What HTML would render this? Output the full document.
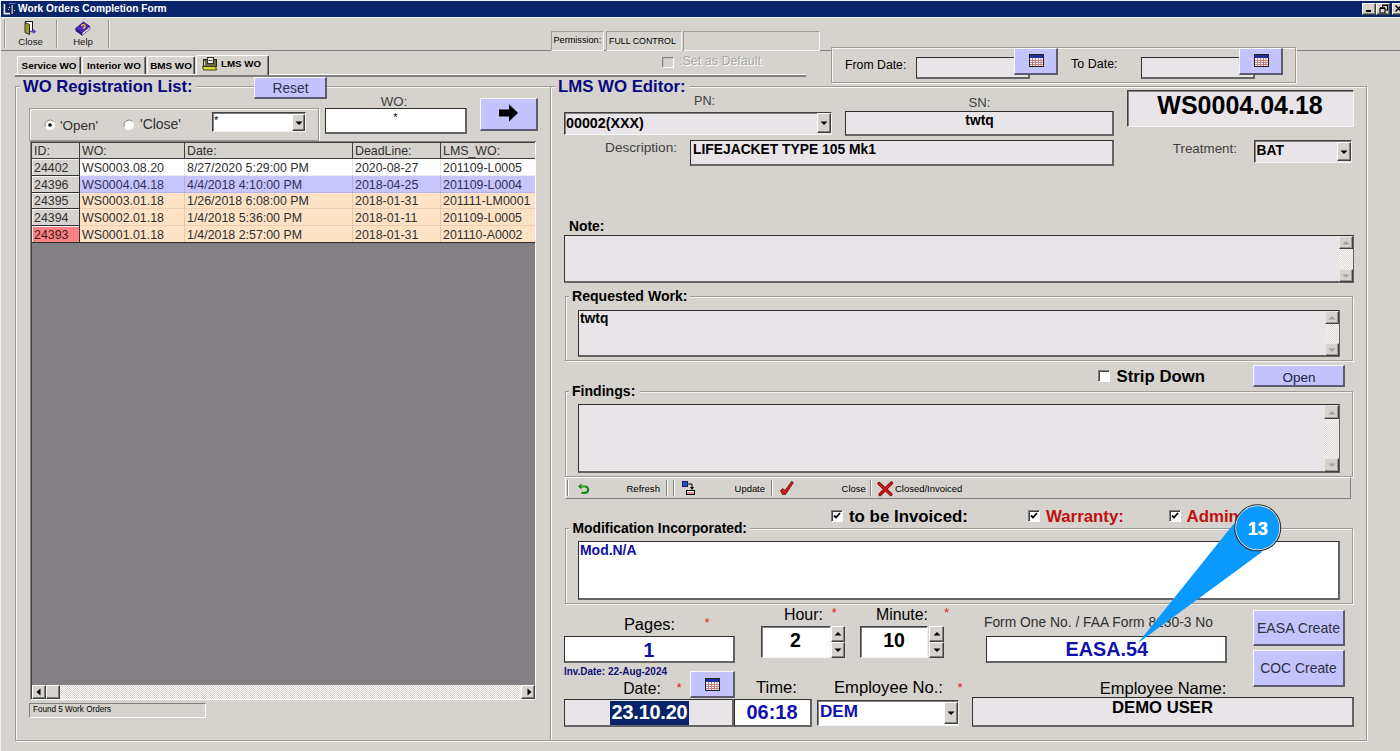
<!DOCTYPE html><html><head><meta charset="utf-8"><style>
html,body{margin:0;padding:0;width:1400px;height:751px;overflow:hidden;background:#d6d3ce}
body{position:relative;font-family:"Liberation Sans",sans-serif}
div{position:absolute}
.t{position:absolute;white-space:nowrap;line-height:1}
svg{position:absolute}
</style></head><body>
<div style="left:0px;top:0px;width:1400px;height:751px;background:#d6d3ce"></div>
<div style="left:0px;top:0px;width:1400px;height:1px;background:#eef0f8"></div>
<div style="left:0px;top:0px;width:1px;height:751px;background:#eef2fc"></div>
<div style="left:1px;top:1px;width:1399px;height:16px;background:#0a246a"></div>
<svg style="position:absolute;left:0;top:0" width="18" height="17"><path d="M4.4 4v9.6h5.6" stroke="#e8e8e0" stroke-width="1.6" fill="none"/><path d="M12.2 5v9" stroke="#b0a878" stroke-width="1.6"/><path d="M9 3.5h6.5" stroke="#6070a8" stroke-width="1"/><circle cx="9.5" cy="7.5" r="0.6" fill="#fff"/><circle cx="8.5" cy="9.5" r="0.6" fill="#fff"/><circle cx="14.5" cy="10.5" r="0.6" fill="#fff"/></svg>
<span class="t" style="left:18px;top:3.87px;font-size:10.2px;font-weight:bold;color:#fff;">Work Orders Completion Form</span>
<div style="left:1362px;top:3px;width:14px;height:12px;background:#d6d3ce;border-style:solid;border-width:1px;border-color:#fff #404040 #404040 #fff;box-shadow:inset -1px -1px #808080;box-sizing:border-box;"></div>
<div style="left:1376px;top:3px;width:14px;height:12px;background:#d6d3ce;border-style:solid;border-width:1px;border-color:#fff #404040 #404040 #fff;box-shadow:inset -1px -1px #808080;box-sizing:border-box;"></div>
<div style="left:1392px;top:3px;width:14px;height:12px;background:#d6d3ce;border-style:solid;border-width:1px;border-color:#fff #404040 #404040 #fff;box-shadow:inset -1px -1px #808080;box-sizing:border-box;"></div>
<div style="position:absolute;left:1366px;top:10px;width:5px;height:2px;background:#000"></div>
<svg style="position:absolute;left:1379px;top:4px" width="10" height="10"><path d="M3.5 3V1h5v5H6.5M3.5 1.5h5" stroke="#000" stroke-width="1.1" fill="none"/><path d="M1 4.5h5v4.5H1z" stroke="#000" stroke-width="1.1" fill="none"/><path d="M1 4h5" stroke="#000" stroke-width="1.6"/></svg>
<svg style="position:absolute;left:1395px;top:5px" width="8" height="8"><path d="M0.5 0.5l6 6M6.5 0.5l-6 6" stroke="#000" stroke-width="1.5"/></svg>
<div style="left:1px;top:17px;width:1399px;height:1px;background:#eef0f6"></div>
<div style="left:1px;top:50px;width:1399px;height:1px;background:#808080"></div>
<div style="left:4px;top:20px;width:1px;height:28px;background:#9a9892"></div>
<div style="left:5px;top:20px;width:1px;height:28px;background:#ecebe6"></div>
<div style="left:56px;top:20px;width:1px;height:28px;background:#9a9892"></div>
<div style="left:57px;top:20px;width:1px;height:28px;background:#ecebe6"></div>
<div style="left:108px;top:20px;width:1px;height:28px;background:#9a9892"></div>
<div style="left:109px;top:20px;width:1px;height:28px;background:#ecebe6"></div>
<svg style="position:absolute;left:15px;top:17px" width="30" height="22" viewBox="15 17 30 22">
<rect x="25.5" y="21.5" width="7" height="10" fill="#fff" stroke="#181818" stroke-width="1"/>
<path d="M25 22.5L29.5 24.5V34.5L25 32.5Z" fill="#a0a028" stroke="#202010" stroke-width="0.9"/>
<path d="M30 31.5h4.5M33 29.8l2.2 1.7-2.2 1.7" stroke="#5050c8" stroke-width="1.6" fill="none"/>
</svg>
<span class="t" style="left:-269.5px;width:600px;text-align:center;top:37.47px;font-size:9.6px;font-weight:normal;color:#202020;">Close</span>
<svg style="position:absolute;left:70px;top:17px" width="25" height="22" viewBox="70 17 25 22">
<path d="M75.5 28.5L83.5 22L90 26.5L82 33Z" fill="#5028c0" stroke="#201060" stroke-width="0.8"/>
<path d="M82 33L90 26.5V29L82 35.5Z" fill="#f0f0f0" stroke="#201060" stroke-width="0.6"/>
<path d="M75.5 28.5L82 33V35.5L75.5 31Z" fill="#281080"/>
<path d="M81.5 26.3a1.8 1.6 0 1 1 2 1.6v1.2" stroke="#f0d040" stroke-width="1.3" fill="none"/>
</svg>
<span class="t" style="left:-217px;width:600px;text-align:center;top:37.47px;font-size:9.6px;font-weight:normal;color:#202020;">Help</span>
<div style="left:17px;top:56px;width:64px;height:18px;background:#d6d3ce;border-left:1px solid #fff;border-top:1px solid #fff;border-right:1px solid #404040;box-shadow:inset -1px 0 #808080;box-sizing:border-box;border-radius:2px 2px 0 0"></div>
<span class="t" style="left:-251.0px;width:600px;text-align:center;top:60.62px;font-size:9.9px;font-weight:bold;color:#000;">Service WO</span>
<div style="left:82px;top:56px;width:64px;height:18px;background:#d6d3ce;border-left:1px solid #fff;border-top:1px solid #fff;border-right:1px solid #404040;box-shadow:inset -1px 0 #808080;box-sizing:border-box;border-radius:2px 2px 0 0"></div>
<span class="t" style="left:-186.0px;width:600px;text-align:center;top:60.62px;font-size:9.9px;font-weight:bold;color:#000;">Interior WO</span>
<div style="left:147px;top:56px;width:48px;height:18px;background:#d6d3ce;border-left:1px solid #fff;border-top:1px solid #fff;border-right:1px solid #404040;box-shadow:inset -1px 0 #808080;box-sizing:border-box;border-radius:2px 2px 0 0"></div>
<span class="t" style="left:-129.0px;width:600px;text-align:center;top:60.62px;font-size:9.9px;font-weight:bold;color:#000;">BMS WO</span>
<div style="left:15px;top:74px;width:791px;height:1px;background:#fff"></div>
<div style="left:15px;top:75px;width:791px;height:2px;background:#808080"></div>
<div style="left:196px;top:55px;width:73px;height:20px;background:#d6d3ce;border-left:1px solid #fff;border-top:1px solid #fff;border-right:1px solid #404040;box-shadow:inset -1px 0 #808080;box-sizing:border-box;border-radius:2px 2px 0 0"></div>
<svg style="position:absolute;left:200px;top:55px" width="20" height="18" viewBox="200 55 20 18">
<rect x="203.5" y="59.5" width="13" height="7" fill="#6a6a48" stroke="#282818"/>
<rect x="207.5" y="57.5" width="6" height="6" fill="#ececec" stroke="#303030"/>
<path d="M208.5 60.5h4" stroke="#505050"/>
<path d="M204.5 61.5v4" stroke="#e0e0c0"/>
<path d="M202.5 66.5h13l1 3.5h-13z" fill="#d8e028" stroke="#303010" stroke-width="0.9"/>
</svg>
<span class="t" style="left:221px;top:58.76px;font-size:9.73px;font-weight:bold;color:#000;">LMS WO</span>
<div style="left:15px;top:86px;width:536px;height:655px;border:1px solid #a09c94;box-sizing:border-box;box-shadow:inset 1px 1px #f6f6f4, 1px 1px #f6f6f4;"></div>
<div style="left:20px;top:78px;width:177px;height:18px;background:#d6d3ce"></div>
<span class="t" style="left:23px;top:78.75px;font-size:16.6px;font-weight:bold;color:#08087e;">WO Registration List:</span>
<div style="left:254px;top:77px;width:73px;height:22px;background:#c5c3fd;border-style:solid;border-width:1px 2px 2px 1px;border-color:#f8f8ff #5c5c6c #5c5c6c #f8f8ff;box-sizing:border-box;"></div>
<span class="t" style="left:-9.5px;width:600px;text-align:center;top:82.32px;font-size:13.8px;font-weight:normal;color:#303050;">Reset</span>
<div style="left:29px;top:108px;width:290px;height:33px;border:1px solid #a09c94;box-sizing:border-box;box-shadow:inset 1px 1px #f6f6f4, 1px 1px #f6f6f4;"></div>
<svg style="position:absolute;left:44px;top:118.5px" width="12" height="12"><circle cx="6" cy="6" r="5" fill="#fff"/><path d="M1.2 7.5A5 5 0 0 1 9.5 2.5" stroke="#808080" fill="none"/><path d="M2.5 9.5A5 5 0 0 0 10.8 4.5" stroke="#f4f4f4" fill="none"/><circle cx="6" cy="6" r="1.8" fill="#000"/></svg>
<span class="t" style="left:60px;top:118.62px;font-size:13.44px;font-weight:normal;color:#303030;">'Open'</span>
<svg style="position:absolute;left:123px;top:118.5px" width="12" height="12"><circle cx="6" cy="6" r="5" fill="#fff"/><path d="M1.2 7.5A5 5 0 0 1 9.5 2.5" stroke="#808080" fill="none"/><path d="M2.5 9.5A5 5 0 0 0 10.8 4.5" stroke="#f4f4f4" fill="none"/></svg>
<span class="t" style="left:140px;top:118.19px;font-size:13.95px;font-weight:normal;color:#303030;">'Close'</span>
<div style="left:212px;top:112px;width:94px;height:20px;background:#fff;border-style:solid;border-width:1px;border-color:#404040 #f4f4f4 #f4f4f4 #404040;box-shadow:inset 1px 1px #808080;box-sizing:border-box;"></div>
<span class="t" style="left:214px;top:114.69px;font-size:11px;font-weight:normal;color:#000;">*</span>
<div style="left:292px;top:114px;width:13px;height:17px;background:#d6d3ce;border-style:solid;border-width:1px;border-color:#fff #404040 #404040 #fff;box-shadow:inset -1px -1px #808080;box-sizing:border-box;"></div>
<svg style="position:absolute;left:294.5px;top:120.5px" width="8" height="5"><path d="M0.5 0.5h7l-3.5 3.5z" fill="#000"/></svg>
<span class="t" style="left:94px;width:600px;text-align:center;top:94.78px;font-size:13.25px;font-weight:normal;color:#404040;">WO:</span>
<div style="left:325px;top:108px;width:142px;height:26px;background:#fff;border-style:solid;border-width:1px 2px 2px 1px;border-color:#303030 #646464 #646464 #303030;box-sizing:border-box;"></div>
<span class="t" style="left:95.5px;width:600px;text-align:center;top:111.69px;font-size:11px;font-weight:normal;color:#000;">*</span>
<div style="left:480px;top:98px;width:58px;height:33px;background:#c5c3fd;border-style:solid;border-width:1px 2px 2px 1px;border-color:#f8f8ff #5c5c6c #5c5c6c #f8f8ff;box-sizing:border-box;"></div>
<svg style="position:absolute;left:498px;top:103px" width="22" height="20" viewBox="0 0 22 20">
<path d="M1 6.5h10V1.5l9 8.5-9 8.5v-5H1z" fill="#000"/>
<path d="M11 1.5l9 8.5" stroke="#555" stroke-width="1"/>
</svg>
<div style="left:30px;top:141px;width:506px;height:559px;background:#828083;border-left:1px solid #808080;border-top:1px solid #808080;box-shadow:inset 1px 1px #404040;box-sizing:border-box"></div>
<div style="left:32px;top:143px;width:503px;height:16px;background:#d6d3ce;border-bottom:1px solid #404040;box-sizing:border-box"></div>
<span class="t" style="left:34px;top:144.50px;font-size:12.4px;font-weight:normal;color:#303030;">ID:</span>
<div style="left:79px;top:143px;width:1px;height:16px;background:#404040"></div>
<span class="t" style="left:82px;top:144.50px;font-size:12.4px;font-weight:normal;color:#303030;">WO:</span>
<div style="left:184px;top:143px;width:1px;height:16px;background:#404040"></div>
<span class="t" style="left:187px;top:144.50px;font-size:12.4px;font-weight:normal;color:#303030;">Date:</span>
<div style="left:352px;top:143px;width:1px;height:16px;background:#404040"></div>
<span class="t" style="left:355px;top:144.50px;font-size:12.4px;font-weight:normal;color:#303030;">DeadLine:</span>
<div style="left:440px;top:143px;width:1px;height:16px;background:#404040"></div>
<span class="t" style="left:443px;top:144.50px;font-size:12.4px;font-weight:normal;color:#303030;">LMS_WO:</span>
<div style="left:32px;top:159px;width:48px;height:17px;background:#d6d3ce;border-bottom:1px solid #303030;border-right:1px solid #303030;box-shadow:inset 1px 1px #f4f4f4;box-sizing:border-box"></div>
<div style="left:80px;top:159px;width:455px;height:17px;background:#ffffff;border-bottom:1px solid rgba(0,0,0,0.08);box-sizing:border-box"></div>
<div style="left:184px;top:159px;width:1px;height:17px;background:rgba(0,0,0,0.1)"></div>
<div style="left:352px;top:159px;width:1px;height:17px;background:rgba(0,0,0,0.1)"></div>
<div style="left:440px;top:159px;width:1px;height:17px;background:rgba(0,0,0,0.1)"></div>
<span class="t" style="left:34px;top:161.50px;font-size:12.4px;font-weight:normal;color:#303030;">24402</span>
<span class="t" style="left:82px;top:161.50px;font-size:12.4px;font-weight:normal;color:#303030;">WS0003.08.20</span>
<span class="t" style="left:187px;top:161.50px;font-size:12.4px;font-weight:normal;color:#303030;">8/27/2020 5:29:00 PM</span>
<span class="t" style="left:355px;top:161.50px;font-size:12.4px;font-weight:normal;color:#303030;">2020-08-27</span>
<span class="t" style="left:443px;top:161.50px;font-size:12.4px;font-weight:normal;color:#303030;">201109-L0005</span>
<div style="left:32px;top:176px;width:48px;height:17px;background:#d6d3ce;border-bottom:1px solid #303030;border-right:1px solid #303030;box-shadow:inset 1px 1px #f4f4f4;box-sizing:border-box"></div>
<div style="left:80px;top:176px;width:455px;height:17px;background:#c8c4fc;border-bottom:1px solid rgba(0,0,0,0.08);box-sizing:border-box"></div>
<div style="left:184px;top:176px;width:1px;height:17px;background:rgba(0,0,0,0.1)"></div>
<div style="left:352px;top:176px;width:1px;height:17px;background:rgba(0,0,0,0.1)"></div>
<div style="left:440px;top:176px;width:1px;height:17px;background:rgba(0,0,0,0.1)"></div>
<span class="t" style="left:34px;top:178.50px;font-size:12.4px;font-weight:normal;color:#303030;">24396</span>
<span class="t" style="left:82px;top:178.50px;font-size:12.4px;font-weight:normal;color:#303060;">WS0004.04.18</span>
<span class="t" style="left:187px;top:178.50px;font-size:12.4px;font-weight:normal;color:#303060;">4/4/2018 4:10:00 PM</span>
<span class="t" style="left:355px;top:178.50px;font-size:12.4px;font-weight:normal;color:#303060;">2018-04-25</span>
<span class="t" style="left:443px;top:178.50px;font-size:12.4px;font-weight:normal;color:#303060;">201109-L0004</span>
<div style="left:32px;top:193px;width:48px;height:16px;background:#d6d3ce;border-bottom:1px solid #303030;border-right:1px solid #303030;box-shadow:inset 1px 1px #f4f4f4;box-sizing:border-box"></div>
<div style="left:80px;top:193px;width:455px;height:16px;background:#fde2c6;border-bottom:1px solid rgba(0,0,0,0.08);box-sizing:border-box"></div>
<div style="left:184px;top:193px;width:1px;height:16px;background:rgba(0,0,0,0.1)"></div>
<div style="left:352px;top:193px;width:1px;height:16px;background:rgba(0,0,0,0.1)"></div>
<div style="left:440px;top:193px;width:1px;height:16px;background:rgba(0,0,0,0.1)"></div>
<span class="t" style="left:34px;top:194.50px;font-size:12.4px;font-weight:normal;color:#303030;">24395</span>
<span class="t" style="left:82px;top:194.50px;font-size:12.4px;font-weight:normal;color:#303030;">WS0003.01.18</span>
<span class="t" style="left:187px;top:194.50px;font-size:12.4px;font-weight:normal;color:#303030;">1/26/2018 6:08:00 PM</span>
<span class="t" style="left:355px;top:194.50px;font-size:12.4px;font-weight:normal;color:#303030;">2018-01-31</span>
<span class="t" style="left:443px;top:194.50px;font-size:12.4px;font-weight:normal;color:#303030;">201111-LM0001</span>
<div style="left:32px;top:209px;width:48px;height:17px;background:#d6d3ce;border-bottom:1px solid #303030;border-right:1px solid #303030;box-shadow:inset 1px 1px #f4f4f4;box-sizing:border-box"></div>
<div style="left:80px;top:209px;width:455px;height:17px;background:#fde2c6;border-bottom:1px solid rgba(0,0,0,0.08);box-sizing:border-box"></div>
<div style="left:184px;top:209px;width:1px;height:17px;background:rgba(0,0,0,0.1)"></div>
<div style="left:352px;top:209px;width:1px;height:17px;background:rgba(0,0,0,0.1)"></div>
<div style="left:440px;top:209px;width:1px;height:17px;background:rgba(0,0,0,0.1)"></div>
<span class="t" style="left:34px;top:211.50px;font-size:12.4px;font-weight:normal;color:#303030;">24394</span>
<span class="t" style="left:82px;top:211.50px;font-size:12.4px;font-weight:normal;color:#303030;">WS0002.01.18</span>
<span class="t" style="left:187px;top:211.50px;font-size:12.4px;font-weight:normal;color:#303030;">1/4/2018 5:36:00 PM</span>
<span class="t" style="left:355px;top:211.50px;font-size:12.4px;font-weight:normal;color:#303030;">2018-01-11</span>
<span class="t" style="left:443px;top:211.50px;font-size:12.4px;font-weight:normal;color:#303030;">201109-L0005</span>
<div style="left:32px;top:226px;width:48px;height:17px;background:#fa8284;border-bottom:1px solid #303030;border-right:1px solid #303030;box-shadow:inset 1px 1px #f4f4f4;box-sizing:border-box"></div>
<div style="left:80px;top:226px;width:455px;height:17px;background:#fde2c6;border-bottom:1px solid rgba(0,0,0,0.08);box-sizing:border-box"></div>
<div style="left:184px;top:226px;width:1px;height:17px;background:rgba(0,0,0,0.1)"></div>
<div style="left:352px;top:226px;width:1px;height:17px;background:rgba(0,0,0,0.1)"></div>
<div style="left:440px;top:226px;width:1px;height:17px;background:rgba(0,0,0,0.1)"></div>
<span class="t" style="left:34px;top:228.50px;font-size:12.4px;font-weight:normal;color:#401818;">24393</span>
<span class="t" style="left:82px;top:228.50px;font-size:12.4px;font-weight:normal;color:#303030;">WS0001.01.18</span>
<span class="t" style="left:187px;top:228.50px;font-size:12.4px;font-weight:normal;color:#303030;">1/4/2018 2:57:00 PM</span>
<span class="t" style="left:355px;top:228.50px;font-size:12.4px;font-weight:normal;color:#303030;">2018-01-31</span>
<span class="t" style="left:443px;top:228.50px;font-size:12.4px;font-weight:normal;color:#303030;">201110-A0002</span>
<div style="left:32px;top:242px;width:503px;height:1px;background:#2a2a2a"></div>
<div style="left:32px;top:685px;width:503px;height:14px;background:repeating-conic-gradient(#fff 0 25%, #d6d3ce 0 50%) 0 0/2px 2px;"></div>
<div style="left:32px;top:685px;width:14px;height:14px;background:#d6d3ce;border-style:solid;border-width:1px;border-color:#fff #404040 #404040 #fff;box-shadow:inset -1px -1px #808080;box-sizing:border-box;"></div>
<div style="left:46px;top:685px;width:14px;height:14px;background:#d6d3ce;border-style:solid;border-width:1px;border-color:#fff #404040 #404040 #fff;box-shadow:inset -1px -1px #808080;box-sizing:border-box;"></div>
<div style="left:521px;top:685px;width:14px;height:14px;background:#d6d3ce;border-style:solid;border-width:1px;border-color:#fff #404040 #404040 #fff;box-shadow:inset -1px -1px #808080;box-sizing:border-box;"></div>
<svg style="position:absolute;left:35px;top:688px" width="8" height="8"><path d="M5.5 0.5v7l-4-3.5z" fill="#000"/></svg>
<svg style="position:absolute;left:525px;top:688px" width="8" height="8"><path d="M2.5 0.5v7l4-3.5z" fill="#000"/></svg>
<div style="left:535px;top:142px;width:1px;height:558px;background:#fff"></div>
<div style="left:31px;top:699px;width:505px;height:1px;background:#fff"></div>
<div style="left:29px;top:703px;width:177px;height:15px;border-style:solid;border-width:1px;border-color:#808080 #fff #fff #808080;box-sizing:border-box"></div>
<span class="t" style="left:33px;top:705.62px;font-size:8.13px;font-weight:normal;color:#000;">Found 5 Work Orders</span>
<div style="left:551px;top:31px;width:53px;height:20px;border-style:solid;border-width:1px;border-color:#a09c96 #f4f4f4 #f4f4f4 #a09c96;box-sizing:border-box"></div>
<span class="t" style="left:553.5px;top:36.25px;font-size:9.15px;font-weight:normal;color:#000;">Permission:</span>
<div style="left:606px;top:31px;width:76px;height:20px;border-style:solid;border-width:1px;border-color:#a09c96 #f4f4f4 #f4f4f4 #a09c96;box-sizing:border-box"></div>
<span class="t" style="left:609px;top:36.52px;font-size:8.84px;font-weight:normal;color:#000;">FULL CONTROL</span>
<div style="left:683px;top:31px;width:137px;height:20px;border-style:solid;border-width:1px;border-color:#a09c96 #f4f4f4 #f4f4f4 #a09c96;box-sizing:border-box"></div>
<div style="left:662px;top:57px;width:12px;height:11px;border-style:solid;border-width:1px;border-color:#808080 #fff #fff #808080;box-shadow:inset 1px 1px #c0c0c0;box-sizing:border-box"></div>
<span class="t" style="left:679px;top:55.42px;font-size:12.5px;font-weight:normal;color:#a8a8a8;text-shadow:1px 1px #fff">:Set as Default</span>
<div style="left:831px;top:47px;width:466px;height:37px;background:#d6d3ce"></div>
<div style="left:831px;top:47px;width:465px;height:36px;border:1px solid #a09c94;box-sizing:border-box;box-shadow:inset 1px 1px #f6f6f4, 1px 1px #f6f6f4;"></div>
<span class="t" style="left:845px;top:58.60px;font-size:12.28px;font-weight:normal;color:#000;">From Date:</span>
<div style="left:916px;top:57px;width:114px;height:22px;background:#e8e4e8;border-style:solid;border-width:1px 2px 2px 1px;border-color:#303030 #646464 #646464 #303030;box-sizing:border-box;"></div>
<div style="left:1014px;top:48px;width:44px;height:27px;background:#c5c3fd;border-style:solid;border-width:1px 2px 2px 1px;border-color:#f8f8ff #5c5c6c #5c5c6c #f8f8ff;box-sizing:border-box;"></div>
<svg style="position:absolute;left:1029px;top:54px" width="15" height="13" viewBox="0 0 15 13">
<rect x="0.5" y="0.5" width="14" height="12" fill="#fff" stroke="#202020"/>
<rect x="1" y="1" width="13" height="3" fill="#2030a0"/>
<path d="M1 6.5h13M1 8.5h13M1 10.5h13M3.5 4v8M6.5 4v8M9.5 4v8M12 4v8" stroke="#c08080" stroke-width="1"/>
</svg>
<span class="t" style="left:1071px;top:58.41px;font-size:12.51px;font-weight:normal;color:#000;">To Date:</span>
<div style="left:1141px;top:57px;width:114px;height:22px;background:#e8e4e8;border-style:solid;border-width:1px 2px 2px 1px;border-color:#303030 #646464 #646464 #303030;box-sizing:border-box;"></div>
<div style="left:1239px;top:48px;width:44px;height:27px;background:#c5c3fd;border-style:solid;border-width:1px 2px 2px 1px;border-color:#f8f8ff #5c5c6c #5c5c6c #f8f8ff;box-sizing:border-box;"></div>
<svg style="position:absolute;left:1254px;top:54px" width="15" height="13" viewBox="0 0 15 13">
<rect x="0.5" y="0.5" width="14" height="12" fill="#fff" stroke="#202020"/>
<rect x="1" y="1" width="13" height="3" fill="#2030a0"/>
<path d="M1 6.5h13M1 8.5h13M1 10.5h13M3.5 4v8M6.5 4v8M9.5 4v8M12 4v8" stroke="#c08080" stroke-width="1"/>
</svg>
<div style="left:550px;top:86px;width:817px;height:655px;border:1px solid #a09c94;box-sizing:border-box;box-shadow:inset 1px 1px #f6f6f4, 1px 1px #f6f6f4;"></div>
<div style="left:555px;top:78px;width:135px;height:18px;background:#d6d3ce"></div>
<span class="t" style="left:558px;top:78.58px;font-size:16.8px;font-weight:bold;color:#08087e;">LMS WO Editor:</span>
<span class="t" style="left:404.5px;width:600px;text-align:center;top:95.33px;font-size:12.6px;font-weight:normal;color:#404040;">PN:</span>
<div style="left:564px;top:112px;width:268px;height:23px;background:#e8e4e8;border-style:solid;border-width:1px;border-color:#404040 #f4f4f4 #f4f4f4 #404040;box-shadow:inset 1px 1px #808080;box-sizing:border-box;"></div>
<span class="t" style="left:566px;top:115.90px;font-size:14.3px;font-weight:bold;color:#000;">00002(XXX)</span>
<div style="left:817px;top:113px;width:14px;height:20px;background:#d6d3ce;border-style:solid;border-width:1px;border-color:#fff #404040 #404040 #fff;box-shadow:inset -1px -1px #808080;box-sizing:border-box;"></div>
<svg style="position:absolute;left:820.0px;top:121.0px" width="8" height="5"><path d="M0.5 0.5h7l-3.5 3.5z" fill="#000"/></svg>
<span class="t" style="left:679.5px;width:600px;text-align:center;top:95.88px;font-size:13.14px;font-weight:normal;color:#404040;">SN:</span>
<div style="left:845px;top:111px;width:269px;height:25px;background:#e8e4e8;border-style:solid;border-width:1px 2px 2px 1px;border-color:#303030 #646464 #646464 #303030;box-sizing:border-box;"></div>
<span class="t" style="left:679.5px;width:600px;text-align:center;top:114.32px;font-size:13.8px;font-weight:bold;color:#000;">twtq</span>
<div style="left:1127px;top:90px;width:227px;height:37px;background:#e8e4e8;border-style:solid;border-width:1px;border-color:#404040 #f4f4f4 #f4f4f4 #404040;box-shadow:inset 1px 1px #808080;box-sizing:border-box;"></div>
<span class="t" style="left:940px;width:600px;text-align:center;top:93.34px;font-size:25px;font-weight:bold;color:#000;">WS0004.04.18</span>
<span class="t" style="left:77px;width:600px;text-align:right;top:140.95px;font-size:13.64px;font-weight:normal;color:#404040;">Description:</span>
<div style="left:690px;top:140px;width:424px;height:26px;background:#e8e4e8;border-style:solid;border-width:1px 2px 2px 1px;border-color:#303030 #646464 #646464 #303030;box-sizing:border-box;"></div>
<span class="t" style="left:693px;top:142.78px;font-size:13.84px;font-weight:bold;color:#000;">LIFEJACKET TYPE 105 Mk1</span>
<span class="t" style="left:637px;width:600px;text-align:right;top:142.16px;font-size:13.4px;font-weight:normal;color:#404040;">Treatment:</span>
<div style="left:1254px;top:140px;width:98px;height:23px;background:#e8e4e8;border-style:solid;border-width:1px;border-color:#404040 #f4f4f4 #f4f4f4 #404040;box-shadow:inset 1px 1px #808080;box-sizing:border-box;"></div>
<span class="t" style="left:1256.5px;top:143.82px;font-size:13.8px;font-weight:bold;color:#000;">BAT</span>
<div style="left:1337px;top:142px;width:14px;height:19px;background:#d6d3ce;border-style:solid;border-width:1px;border-color:#fff #404040 #404040 #fff;box-shadow:inset -1px -1px #808080;box-sizing:border-box;"></div>
<svg style="position:absolute;left:1340.0px;top:149.5px" width="8" height="5"><path d="M0.5 0.5h7l-3.5 3.5z" fill="#000"/></svg>
<span class="t" style="left:569px;top:220.28px;font-size:13.85px;font-weight:bold;color:#000;">Note:</span>
<div style="left:564px;top:235px;width:790px;height:48px;background:#e8e4e8;border-style:solid;border-width:1px 2px 2px 1px;border-color:#303030 #646464 #646464 #303030;box-sizing:border-box;"></div>
<div style="left:1339px;top:236px;width:14px;height:46px;background:repeating-conic-gradient(#f8f8f8 0 25%, #dedad4 0 50%) 0 0/2px 2px;"></div>
<div style="left:1339px;top:236px;width:14px;height:13px;background:#d6d3ce;border-style:solid;border-width:1px;border-color:#e8e6e2 #404040 #404040 #e8e6e2;box-shadow:inset -1px -1px #9a9892;box-sizing:border-box"></div>
<div style="left:1339px;top:269px;width:14px;height:13px;background:#d6d3ce;border-style:solid;border-width:1px;border-color:#e8e6e2 #404040 #404040 #e8e6e2;box-shadow:inset -1px -1px #9a9892;box-sizing:border-box"></div>
<svg style="position:absolute;left:1342.0px;top:240.0px" width="8" height="5"><path d="M0.5 4.5h7l-3.5-3.5z" fill="#a0a0a0"/></svg>
<svg style="position:absolute;left:1342.0px;top:273.5px" width="8" height="5"><path d="M0.5 0.5h7l-3.5 3.5z" fill="#a0a0a0"/></svg>
<div style="left:565px;top:296px;width:788px;height:65px;border:1px solid #a09c94;box-sizing:border-box;box-shadow:inset 1px 1px #f6f6f4, 1px 1px #f6f6f4;"></div>
<div style="left:569px;top:290px;width:121px;height:12px;background:#d6d3ce"></div>
<span class="t" style="left:572px;top:289.07px;font-size:14.09px;font-weight:bold;color:#000;">Requested Work:</span>
<div style="left:578px;top:310px;width:762px;height:47px;background:#e8e4e8;border-style:solid;border-width:1px 2px 2px 1px;border-color:#303030 #646464 #646464 #303030;box-sizing:border-box;"></div>
<span class="t" style="left:580px;top:311.82px;font-size:13.8px;font-weight:bold;color:#000;">twtq</span>
<div style="left:1325px;top:311px;width:14px;height:45px;background:repeating-conic-gradient(#f8f8f8 0 25%, #dedad4 0 50%) 0 0/2px 2px;"></div>
<div style="left:1325px;top:311px;width:14px;height:13px;background:#d6d3ce;border-style:solid;border-width:1px;border-color:#e8e6e2 #404040 #404040 #e8e6e2;box-shadow:inset -1px -1px #9a9892;box-sizing:border-box"></div>
<div style="left:1325px;top:343px;width:14px;height:13px;background:#d6d3ce;border-style:solid;border-width:1px;border-color:#e8e6e2 #404040 #404040 #e8e6e2;box-shadow:inset -1px -1px #9a9892;box-sizing:border-box"></div>
<svg style="position:absolute;left:1328.0px;top:315.0px" width="8" height="5"><path d="M0.5 4.5h7l-3.5-3.5z" fill="#a0a0a0"/></svg>
<svg style="position:absolute;left:1328.0px;top:347.5px" width="8" height="5"><path d="M0.5 0.5h7l-3.5 3.5z" fill="#a0a0a0"/></svg>
<div style="left:1098px;top:370px;width:12px;height:12px;background:#fff;border-style:solid;border-width:1px;border-color:#808080 #fff #fff #808080;box-shadow:inset 1px 1px #404040;box-sizing:border-box;"></div>
<span class="t" style="left:1116.6px;top:368.82px;font-size:16.75px;font-weight:bold;color:#000;">Strip Down</span>
<div style="left:1253px;top:365px;width:92px;height:22px;background:#c5c3fd;border-style:solid;border-width:1px 2px 2px 1px;border-color:#f8f8ff #5c5c6c #5c5c6c #f8f8ff;box-sizing:border-box;"></div>
<span class="t" style="left:999px;width:600px;text-align:center;top:370.57px;font-size:13.5px;font-weight:normal;color:#202040;">Open</span>
<div style="left:565px;top:391px;width:788px;height:86px;border:1px solid #a09c94;box-sizing:border-box;box-shadow:inset 1px 1px #f6f6f4, 1px 1px #f6f6f4;"></div>
<div style="left:569px;top:384px;width:71px;height:13px;background:#d6d3ce"></div>
<span class="t" style="left:572px;top:384.07px;font-size:14.09px;font-weight:bold;color:#000;">Findings:</span>
<div style="left:578px;top:404px;width:762px;height:69px;background:#e8e4e8;border-style:solid;border-width:1px 2px 2px 1px;border-color:#303030 #646464 #646464 #303030;box-sizing:border-box;"></div>
<div style="left:1324px;top:405px;width:15px;height:67px;background:repeating-conic-gradient(#f8f8f8 0 25%, #dedad4 0 50%) 0 0/2px 2px;"></div>
<div style="left:1324px;top:405px;width:15px;height:14px;background:#d6d3ce;border-style:solid;border-width:1px;border-color:#e8e6e2 #404040 #404040 #e8e6e2;box-shadow:inset -1px -1px #9a9892;box-sizing:border-box"></div>
<div style="left:1324px;top:458px;width:15px;height:14px;background:#d6d3ce;border-style:solid;border-width:1px;border-color:#e8e6e2 #404040 #404040 #e8e6e2;box-shadow:inset -1px -1px #9a9892;box-sizing:border-box"></div>
<svg style="position:absolute;left:1327.5px;top:409.5px" width="8" height="5"><path d="M0.5 4.5h7l-3.5-3.5z" fill="#a0a0a0"/></svg>
<svg style="position:absolute;left:1327.5px;top:463.0px" width="8" height="5"><path d="M0.5 0.5h7l-3.5 3.5z" fill="#a0a0a0"/></svg>
<div style="left:565px;top:477px;width:786px;height:22px;border-style:solid;border-width:1px;border-color:#fff #808080 #808080 #fff;box-sizing:border-box"></div>
<div style="left:567px;top:480px;width:1px;height:16px;background:#808080"></div>
<div style="left:568px;top:480px;width:1px;height:16px;background:#fff"></div>
<div style="left:666px;top:480px;width:1px;height:16px;background:#808080"></div>
<div style="left:667px;top:480px;width:1px;height:16px;background:#fff"></div>
<div style="left:673px;top:480px;width:1px;height:16px;background:#808080"></div>
<div style="left:674px;top:480px;width:1px;height:16px;background:#fff"></div>
<div style="left:771px;top:480px;width:1px;height:16px;background:#808080"></div>
<div style="left:772px;top:480px;width:1px;height:16px;background:#fff"></div>
<div style="left:870px;top:480px;width:1px;height:16px;background:#808080"></div>
<div style="left:871px;top:480px;width:1px;height:16px;background:#fff"></div>
<svg style="position:absolute;left:576px;top:481px" width="16" height="15" viewBox="576 481 16 15"><path d="M580.5 486.5h4.5a3.2 3.2 0 0 1 0 6.4h-3.5" stroke="#108a10" stroke-width="2.2" fill="none"/><path d="M578 486.5l3.5-3v6z" fill="#108a10"/><path d="M581 486.5h4" stroke="#50d050" stroke-width="0.8"/></svg>
<span class="t" style="left:626.4px;top:483.87px;font-size:9.6px;font-weight:normal;color:#000;">Refresh</span>
<svg style="position:absolute;left:682px;top:481px" width="14" height="14" viewBox="0 0 14 14"><rect x="0.5" y="0.5" width="5" height="5" fill="#2050d0" stroke="#102060"/><path d="M6 3h4v5" stroke="#000" fill="none"/><path d="M8 6l2 3 2-3" fill="#000"/><rect x="4.5" y="9.5" width="8" height="4" fill="#fff" stroke="#000"/><path d="M5 12h7" stroke="#d02020"/></svg>
<span class="t" style="left:734.6px;top:484.02px;font-size:9.43px;font-weight:normal;color:#000;">Update</span>
<svg style="position:absolute;left:778px;top:480px" width="18" height="16" viewBox="778 480 18 16"><path d="M780.5 490.5L783 488.5L785 490.5L791.5 481.5L793.5 482.5L785.5 494.5L782.5 494.5Z" fill="#d01818" stroke="#600808" stroke-width="0.7"/></svg>
<span class="t" style="left:841.6px;top:483.96px;font-size:9.5px;font-weight:normal;color:#000;">Close</span>
<svg style="position:absolute;left:876px;top:480px" width="18" height="17" viewBox="876 480 18 17"><path d="M879 483.5L891 494.5M891.5 483L880 494.5" stroke="#600808" stroke-width="3.2" stroke-linecap="round"/><path d="M879 483.5L891 494.5M891.5 483L880 494.5" stroke="#d81818" stroke-width="2" stroke-linecap="round"/></svg>
<span class="t" style="left:895px;top:483.98px;font-size:9.47px;font-weight:normal;color:#000;">Closed/Invoiced</span>
<div style="left:831px;top:510px;width:12px;height:12px;background:#fff;border-style:solid;border-width:1px;border-color:#808080 #fff #fff #808080;box-shadow:inset 1px 1px #404040;box-sizing:border-box;"></div>
<svg style="position:absolute;left:831px;top:510px" width="12" height="12"><path d="M3 5.5l2 2 4-4.5" stroke="#000" stroke-width="1.8" fill="none"/></svg>
<span class="t" style="left:849px;top:508.73px;font-size:16.86px;font-weight:bold;color:#000;">to be Invoiced:</span>
<div style="left:1028px;top:510px;width:12px;height:12px;background:#fff;border-style:solid;border-width:1px;border-color:#808080 #fff #fff #808080;box-shadow:inset 1px 1px #404040;box-sizing:border-box;"></div>
<svg style="position:absolute;left:1028px;top:510px" width="12" height="12"><path d="M3 5.5l2 2 4-4.5" stroke="#000" stroke-width="1.8" fill="none"/></svg>
<span class="t" style="left:1046px;top:508.74px;font-size:16.84px;font-weight:bold;color:#c01010;">Warranty:</span>
<div style="left:1169px;top:510px;width:12px;height:12px;background:#fff;border-style:solid;border-width:1px;border-color:#808080 #fff #fff #808080;box-shadow:inset 1px 1px #404040;box-sizing:border-box;"></div>
<svg style="position:absolute;left:1169px;top:510px" width="12" height="12"><path d="M3 5.5l2 2 4-4.5" stroke="#000" stroke-width="1.8" fill="none"/></svg>
<span class="t" style="left:1186.5px;top:508.74px;font-size:16.84px;font-weight:bold;color:#c01010;">Admin:</span>
<div style="left:565px;top:528px;width:788px;height:76px;border:1px solid #a09c94;box-sizing:border-box;box-shadow:inset 1px 1px #f6f6f4, 1px 1px #f6f6f4;"></div>
<div style="left:569px;top:520px;width:181px;height:14px;background:#d6d3ce"></div>
<span class="t" style="left:572.6px;top:522.29px;font-size:13.83px;font-weight:bold;color:#000;">Modification Incorporated:</span>
<div style="left:578px;top:541px;width:762px;height:59px;background:#fff;border-style:solid;border-width:1px 2px 2px 1px;border-color:#303030 #646464 #646464 #303030;box-sizing:border-box;"></div>
<span class="t" style="left:580px;top:544.18px;font-size:13.96px;font-weight:bold;color:#1010a0;">Mod.N/A</span>
<span class="t" style="left:349.5px;width:600px;text-align:center;top:616.28px;font-size:16.45px;font-weight:normal;color:#000;">Pages:</span>
<span class="t" style="left:704.5px;top:616.07px;font-size:13.5px;font-weight:normal;color:#e02020;">*</span>
<div style="left:564px;top:636px;width:171px;height:27px;background:#fff;border-style:solid;border-width:1px 2px 2px 1px;border-color:#303030 #646464 #646464 #303030;box-sizing:border-box;"></div>
<span class="t" style="left:349px;width:600px;text-align:center;top:640.79px;font-size:19.5px;font-weight:bold;color:#1010a0;">1</span>
<span class="t" style="left:564px;top:666.59px;font-size:9.93px;font-weight:bold;color:#101070;transform:scaleY(1.15);transform-origin:0 100%">Inv.Date: 22-Aug-2024</span>
<span class="t" style="left:342px;width:600px;text-align:center;top:680.68px;font-size:15.73px;font-weight:normal;color:#000;">Date:</span>
<span class="t" style="left:676.5px;top:681.07px;font-size:13.5px;font-weight:normal;color:#e02020;">*</span>
<div style="left:690px;top:671px;width:45px;height:27px;background:#c5c3fd;border-style:solid;border-width:1px 2px 2px 1px;border-color:#f8f8ff #5c5c6c #5c5c6c #f8f8ff;box-sizing:border-box;"></div>
<svg style="position:absolute;left:705px;top:678px" width="15" height="13" viewBox="0 0 15 13">
<rect x="0.5" y="0.5" width="14" height="12" fill="#fff" stroke="#202020"/>
<rect x="1" y="1" width="13" height="3" fill="#2030a0"/>
<path d="M1 6.5h13M1 8.5h13M1 10.5h13M3.5 4v8M6.5 4v8M9.5 4v8M12 4v8" stroke="#c08080" stroke-width="1"/>
</svg>
<div style="left:564px;top:699px;width:170px;height:28px;background:#e8e4e8;border-style:solid;border-width:1px 2px 2px 1px;border-color:#303030 #646464 #646464 #303030;box-sizing:border-box;"></div>
<div style="left:610px;top:701px;width:79px;height:24px;background:#0a246a"></div>
<span class="t" style="left:349.5px;width:600px;text-align:center;top:703.45px;font-size:19.9px;font-weight:normal;color:#fff;font-weight:bold;letter-spacing:-0.2px">23.10.20</span>
<span class="t" style="left:503.5px;width:600px;text-align:center;top:606.50px;font-size:15.95px;font-weight:normal;color:#000;">Hour:</span>
<span class="t" style="left:831.5px;top:606.07px;font-size:13.5px;font-weight:normal;color:#e02020;">*</span>
<div style="left:761px;top:626px;width:70px;height:32px;background:#fff;border-style:solid;border-width:1px;border-color:#404040 #f4f4f4 #f4f4f4 #404040;box-shadow:inset 1px 1px #808080;box-sizing:border-box;"></div>
<span class="t" style="left:495.5px;width:600px;text-align:center;top:630.99px;font-size:19.5px;font-weight:bold;color:#000;">2</span>
<div style="left:831px;top:626px;width:14px;height:16px;background:#d6d3ce;border-style:solid;border-width:1px;border-color:#fff #404040 #404040 #fff;box-shadow:inset -1px -1px #808080;box-sizing:border-box;"></div>
<div style="left:831px;top:642px;width:14px;height:16px;background:#d6d3ce;border-style:solid;border-width:1px;border-color:#fff #404040 #404040 #fff;box-shadow:inset -1px -1px #808080;box-sizing:border-box;"></div>
<svg style="position:absolute;left:834px;top:631px" width="8" height="5"><path d="M0.5 4.5h7l-3.5-3.5z" fill="#000"/></svg>
<svg style="position:absolute;left:834px;top:648px" width="8" height="5"><path d="M0.5 0.5h7l-3.5 3.5z" fill="#000"/></svg>
<span class="t" style="left:602px;width:600px;text-align:center;top:606.57px;font-size:15.86px;font-weight:normal;color:#000;">Minute:</span>
<span class="t" style="left:944.0px;top:606.07px;font-size:13.5px;font-weight:normal;color:#e02020;">*</span>
<div style="left:860px;top:626px;width:68px;height:32px;background:#fff;border-style:solid;border-width:1px;border-color:#404040 #f4f4f4 #f4f4f4 #404040;box-shadow:inset 1px 1px #808080;box-sizing:border-box;"></div>
<span class="t" style="left:594px;width:600px;text-align:center;top:630.99px;font-size:19.5px;font-weight:bold;color:#000;">10</span>
<div style="left:929px;top:626px;width:15px;height:16px;background:#d6d3ce;border-style:solid;border-width:1px;border-color:#fff #404040 #404040 #fff;box-shadow:inset -1px -1px #808080;box-sizing:border-box;"></div>
<div style="left:929px;top:642px;width:15px;height:16px;background:#d6d3ce;border-style:solid;border-width:1px;border-color:#fff #404040 #404040 #fff;box-shadow:inset -1px -1px #808080;box-sizing:border-box;"></div>
<svg style="position:absolute;left:932.5px;top:631px" width="8" height="5"><path d="M0.5 4.5h7l-3.5-3.5z" fill="#000"/></svg>
<svg style="position:absolute;left:932.5px;top:648px" width="8" height="5"><path d="M0.5 0.5h7l-3.5 3.5z" fill="#000"/></svg>
<span class="t" style="left:476.5px;width:600px;text-align:center;top:679.91px;font-size:16.65px;font-weight:normal;color:#000;">Time:</span>
<div style="left:734px;top:699px;width:78px;height:28px;background:#fff;border-style:solid;border-width:1px 2px 2px 1px;border-color:#303030 #646464 #646464 #303030;box-sizing:border-box;"></div>
<span class="t" style="left:472px;width:600px;text-align:center;top:703.12px;font-size:19.94px;font-weight:bold;color:#1010b0;">06:18</span>
<span class="t" style="left:588.5px;width:600px;text-align:center;top:679.93px;font-size:16.62px;font-weight:normal;color:#000;">Employee No.:</span>
<span class="t" style="left:957.5px;top:681.07px;font-size:13.5px;font-weight:normal;color:#e02020;">*</span>
<div style="left:817px;top:700px;width:142px;height:26px;background:#fff;border-style:solid;border-width:1px;border-color:#404040 #f4f4f4 #f4f4f4 #404040;box-shadow:inset 1px 1px #808080;box-sizing:border-box;"></div>
<span class="t" style="left:820px;top:703.02px;font-size:17.1px;font-weight:bold;color:#1010b0;">DEM</span>
<div style="left:944px;top:702px;width:14px;height:22px;background:#d6d3ce;border-style:solid;border-width:1px;border-color:#fff #404040 #404040 #fff;box-shadow:inset -1px -1px #808080;box-sizing:border-box;"></div>
<svg style="position:absolute;left:947.0px;top:711.0px" width="8" height="5"><path d="M0.5 0.5h7l-3.5 3.5z" fill="#000"/></svg>
<span class="t" style="left:798.5px;width:600px;text-align:center;top:615.78px;font-size:13.84px;font-weight:normal;color:#303030;">Form One No. / FAA Form 8130-3 No</span>
<div style="left:986px;top:636px;width:241px;height:27px;background:#fff;border-style:solid;border-width:1px 2px 2px 1px;border-color:#303030 #646464 #646464 #303030;box-sizing:border-box;"></div>
<span class="t" style="left:806.7px;width:600px;text-align:center;top:639.94px;font-size:19.8px;font-weight:bold;color:#1010b0;">EASA.54</span>
<div style="left:1253px;top:610px;width:92px;height:36px;background:#c5c3fd;border-style:solid;border-width:1px 2px 2px 1px;border-color:#f8f8ff #5c5c6c #5c5c6c #f8f8ff;box-sizing:border-box;"></div>
<span class="t" style="left:998.5px;width:600px;text-align:center;top:621.03px;font-size:14.14px;font-weight:normal;color:#303040;">EASA Create</span>
<div style="left:1253px;top:650px;width:92px;height:37px;background:#c5c3fd;border-style:solid;border-width:1px 2px 2px 1px;border-color:#f8f8ff #5c5c6c #5c5c6c #f8f8ff;box-sizing:border-box;"></div>
<span class="t" style="left:998.5px;width:600px;text-align:center;top:661.73px;font-size:13.9px;font-weight:normal;color:#303040;">COC Create</span>
<span class="t" style="left:863px;width:600px;text-align:center;top:680.02px;font-size:16.51px;font-weight:normal;color:#000;">Employee Name:</span>
<div style="left:972px;top:697px;width:382px;height:30px;background:#e8e4e8;border-style:solid;border-width:1px 2px 2px 1px;border-color:#303030 #646464 #646464 #303030;box-sizing:border-box;"></div>
<span class="t" style="left:862.5px;width:600px;text-align:center;top:699.58px;font-size:16.68px;font-weight:bold;color:#000;">DEMO USER</span>
<svg style="position:absolute;left:0;top:0" width="1400" height="751">
<path d="M1233.6 524 L1138 643 L1262 552 Z" fill="#0a99ff"/>
<circle cx="1257.7" cy="527.8" r="22.2" fill="#0a99ff" stroke="#fff" stroke-width="1"/>
<circle cx="1257.7" cy="527.8" r="23" fill="none" stroke="#303030" stroke-width="1.1"/>
</svg>
<span class="t" style="left:957.7px;width:600px;text-align:center;top:519.76px;font-size:18px;font-weight:bold;color:#fff;text-shadow:0.4px 0 #fff">13</span>
</body></html>
